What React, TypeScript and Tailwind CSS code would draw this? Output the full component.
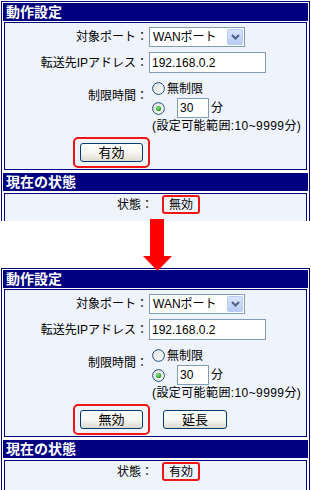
import React from "react";

const FONT = "font-['Liberation_Sans','Noto_Sans_CJK_JP',sans-serif]";

function Radio({ checked }: { checked?: boolean }) {
  return (
    <svg width="13" height="13" viewBox="0 0 13 13" className="shrink-0">
      <defs>
        <linearGradient id="rg" x1="0" y1="0" x2="1" y2="1">
          <stop offset="0" stopColor="#dcdcd7" />
          <stop offset="1" stopColor="#ffffff" />
        </linearGradient>
        <radialGradient id="gd" cx="0.4" cy="0.4" r="0.6">
          <stop offset="0" stopColor="#8fe68f" />
          <stop offset="1" stopColor="#1b9a1b" />
        </radialGradient>
      </defs>
      <circle cx="6.5" cy="6.5" r="5.9" fill="url(#rg)" stroke="#1c5180" strokeWidth="1" />
      {checked && <circle cx="6.5" cy="6.5" r="2.6" fill="url(#gd)" />}
    </svg>
  );
}

function XPButton({ children, w }: { children: React.ReactNode; w: string }) {
  return (
    <div
      className={`${w} h-[19px] rounded-[3px] border border-[#003c74] bg-gradient-to-b from-white via-[#f6f6f3] to-[#dedbd0] flex items-center justify-center text-[13px] leading-[15px] text-black`}
    >
      {children}
    </div>
  );
}

function Header({ children, className = "" }: { children: React.ReactNode; className?: string }) {
  return (
    <div
      className={`h-[18px] bg-[#000080] text-white font-bold text-[14px] leading-[18px] pl-[3px] ${className}`}
    >
      {children}
    </div>
  );
}

function Panel({ second }: { second?: boolean }) {
  return (
    <div className="ml-[1px] w-[309px] border border-[#000080] p-[1px] bg-white">
      <Header>動作設定</Header>
      <div className="mx-[1px] mt-[1px] h-[148px] border border-[#000080] bg-[#eff3fb] text-[12px] leading-[14px] text-black">
        <div className="pt-[4px] flex items-center">
          <div className="w-[143px] text-right">対象ポート：</div>
          <div className="ml-[1px] w-[96px] h-[20px] border border-[#7f9db9] bg-white flex items-center">
            <span className="pl-[3px] flex-1 text-[12px]">WANポート</span>
            <div className="mr-[1px] w-[16px] h-[16px] rounded-[2px] border border-[#b7cbf3] bg-gradient-to-b from-[#d9e5fd] to-[#b7cbf5] flex items-center justify-center">
              <svg width="9" height="6" viewBox="0 0 9 6">
                <path d="M1 1 L4.5 4.5 L8 1" fill="none" stroke="#4d6185" strokeWidth="2" />
              </svg>
            </div>
          </div>
        </div>
        <div className="mt-[5px] flex items-center">
          <div className="w-[143px] text-right">転送先IPアドレス：</div>
          <div className="ml-[1px] w-[117px] h-[21px] border border-[#7f9db9] bg-white flex items-center pl-[2px]">
            192.168.0.2
          </div>
        </div>
        <div className="mt-[8px] flex">
          <div className="w-[143px] text-right pt-[8px]">制限時間：</div>
          <div className="ml-[1px] flex flex-col">
            <div className="h-[15px] flex items-center pl-[3px]">
              <Radio />
              <span className="ml-[2px]">無制限</span>
            </div>
            <div className="mt-[2px] h-[20px] flex items-center pl-[3px]">
              <Radio checked />
              <div className="ml-[12px] w-[32px] h-[20px] border border-[#7f9db9] bg-white flex items-center pl-[2px]">
                30
              </div>
              <span className="ml-[2px]">分</span>
            </div>
            <div className="h-[15px] flex items-center pl-[3px] tracking-[0.4px]">(設定可能範囲:10~9999分)</div>
          </div>
        </div>
        <div className="mt-[4px] flex items-center pl-[68px]">
          <div className="rounded-[5px] border-2 border-[#f01414] px-[5px] py-[4px]">
            <XPButton w="w-[63px]">{second ? "無効" : "有効"}</XPButton>
          </div>
          {second && (
            <div className="ml-[13px]">
              <XPButton w="w-[64px]">延長</XPButton>
            </div>
          )}
        </div>
      </div>
      <Header className="mt-[3px]">現在の状態</Header>
      <div className="mx-[1px] mt-[2px] h-[60px] border border-[#000080] bg-[#eff3fb] text-[12px] leading-[14px] text-black">
        <div className="pt-[1px] pl-[112px] flex items-center">
          <span>状態：</span>
          <div className="ml-[9px] w-[38px] h-[19px] rounded-[3px] border-2 border-[#f01414] flex items-center justify-center">
            {second ? "有効" : "無効"}
          </div>
        </div>
      </div>
    </div>
  );
}

export default function App() {
  return (
    <div className={`relative w-[311px] h-[490px] overflow-hidden bg-white ${FONT}`}>
      <div className="pt-[1px] h-[221px] overflow-hidden">
        <Panel />
      </div>
      <div className="h-[47px]" />
      <Panel second />
      <svg
        className="absolute left-[140px] top-[219px]"
        width="36"
        height="54"
        viewBox="140 219 36 54"
      >
        <polygon
          points="150,219 164,219 164,256 172,256 157.5,271 143,256 150,256"
          fill="#ff0000"
        />
      </svg>
    </div>
  );
}
